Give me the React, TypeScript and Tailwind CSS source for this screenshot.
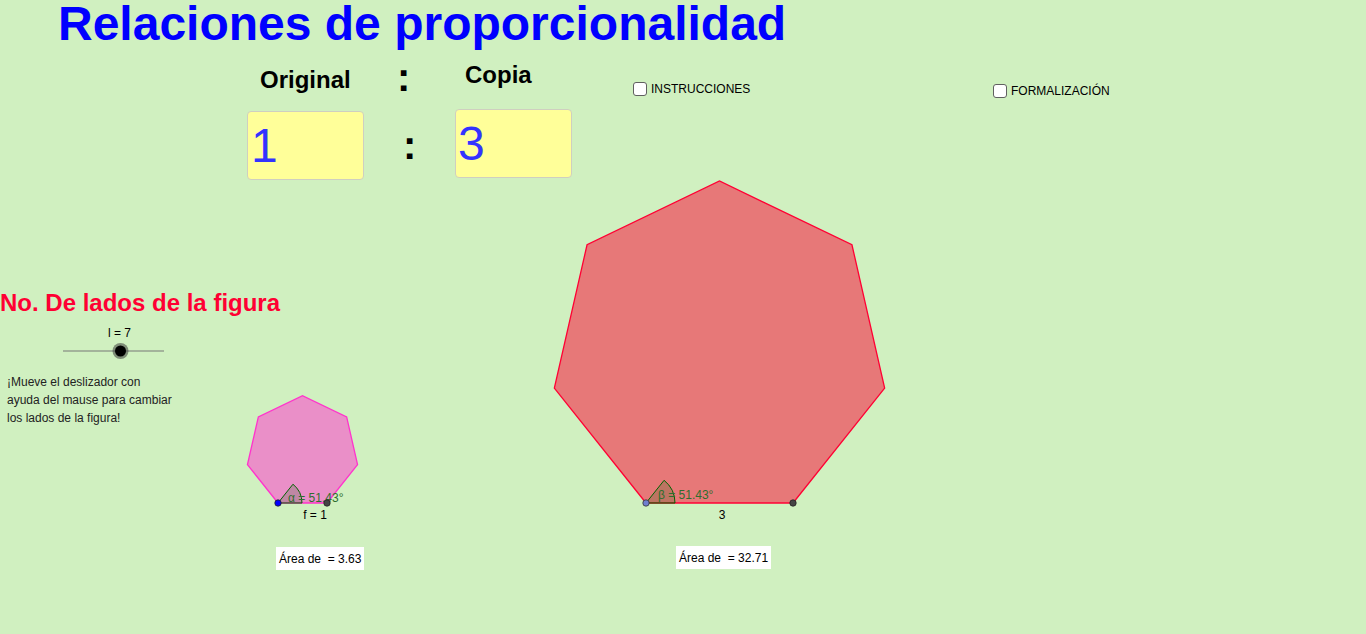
import React from 'react';

type Pt = [number, number];

// regular polygon built from its base edge, going counter-clockwise on screen
function polygon(x0: number, y0: number, side: number, n: number): Pt[] {
  const pts: Pt[] = [[x0, y0]];
  let ang = 0;
  let [x, y] = [x0, y0];
  for (let i = 1; i < n; i++) {
    x += side * Math.cos(ang);
    y -= side * Math.sin(ang);
    pts.push([x, y]);
    ang += (2 * Math.PI) / n;
  }
  return pts;
}

function sector(cx: number, cy: number, r: number, deg: number) {
  const a = (deg * Math.PI) / 180;
  const ex = cx + r * Math.cos(a);
  const ey = cy - r * Math.sin(a);
  return `M ${cx} ${cy} L ${cx + r} ${cy} A ${r} ${r} 0 0 0 ${ex} ${ey} Z`;
}

const toStr = (p: Pt[]) => p.map(([x, y]) => `${x},${y}`).join(' ');

const small = polygon(278, 503, 49, 7);
const big = polygon(646, 503, 147, 7);

const font = { fontFamily: '"Liberation Sans", Arial, sans-serif' };

function Checkbox({ label }: { label: string }) {
  return (
    <div className="flex items-center gap-[4px]">
      <div className="w-[14px] h-[14px] rounded-[3px] border border-[#606060] bg-white" />
      <span className="text-[12px] text-black leading-none">{label}</span>
    </div>
  );
}

export default function App() {
  return (
    <div className="relative w-[1366px] h-[634px] bg-[#d0f0c0] overflow-hidden" style={font}>
      <svg className="absolute inset-0" width={1366} height={634}>
        <polygon points={toStr(small)} fill="#ea8fc8" stroke="#ff33cc" strokeWidth={1.3} />
        <polygon points={toStr(big)} fill="#e77878" stroke="#ff0033" strokeWidth={1.3} />

        <path d={sector(278, 503, 24, 51.43)} fill="rgba(0,100,0,0.18)" stroke="#006400" strokeWidth={1} />
        <path d={sector(646, 503, 29, 51.43)} fill="rgba(0,100,0,0.18)" stroke="#006400" strokeWidth={1} />

        <text x={288} y={502} fontSize={12} fill="#2f6e2f" style={font}>α = 51.43°</text>
        <text x={658} y={499} fontSize={12} fill="#2f6e2f" style={font}>β = 51.43°</text>
        <text x={315} y={519} fontSize={12} fill="#000" textAnchor="middle" style={font}>f = 1</text>
        <text x={722} y={519} fontSize={12} fill="#000" textAnchor="middle" style={font}>3</text>

        <circle cx={278} cy={503} r={3.2} fill="#0000ff" stroke="#222" strokeWidth={0.8} />
        <circle cx={327} cy={503} r={3.2} fill="#444" stroke="#222" strokeWidth={0.8} />
        <circle cx={646} cy={503} r={3.2} fill="#6f7fd0" stroke="#333" strokeWidth={0.8} />
        <circle cx={793} cy={503} r={3.2} fill="#444" stroke="#222" strokeWidth={0.8} />

        {/* slider */}
        <line x1={63} y1={351} x2={164} y2={351} stroke="#777" strokeWidth={1} />
        <circle cx={120.5} cy={351} r={8} fill="rgba(60,60,60,0.55)" />
        <circle cx={120.5} cy={351} r={5.5} fill="#000" />
      </svg>

      <h1 className="absolute left-[58px] top-0 text-[48px] leading-none font-bold text-[#0000ff] whitespace-nowrap">
        Relaciones de proporcionalidad
      </h1>

      <div className="absolute left-[260px] top-[62px] text-[24px] font-bold text-black">Original</div>
      <div className="absolute left-[397px] top-[57px] text-[40px] font-bold text-black leading-none">:</div>
      <div className="absolute left-[465px] top-[57px] text-[24px] font-bold text-black">Copia</div>

      <div className="absolute left-[247px] top-[111px] w-[117px] h-[69px] bg-[#ffff99] border border-[#cfcfc0] rounded-[4px] flex items-center pl-[3px]">
        <span className="text-[48px] text-[#3333ff] leading-none">1</span>
      </div>
      <div className="absolute left-[403px] top-[125px] text-[40px] font-bold text-black leading-none">:</div>
      <div className="absolute left-[455px] top-[109px] w-[117px] h-[69px] bg-[#ffff99] border border-[#cfcfc0] rounded-[4px] flex items-center pl-[2px]">
        <span className="text-[48px] text-[#3333ff] leading-none">3</span>
      </div>

      <div className="absolute left-[633px] top-[82px]">
        <Checkbox label="INSTRUCCIONES" />
      </div>
      <div className="absolute left-[993px] top-[84px]">
        <Checkbox label="FORMALIZACIÓN" />
      </div>

      <div className="absolute left-0 top-[285px] text-[24px] font-bold text-[#ff0033] whitespace-nowrap">
        No. De lados de la figura
      </div>
      <div className="absolute left-[108px] top-[324px] text-[12px] text-black">l = 7</div>

      <div className="absolute left-[7px] top-[373px] text-[12px] leading-[18px] text-[#222]">
        <p>¡Mueve el deslizador con</p>
        <p>ayuda del mause para cambiar</p>
        <p>los lados de la figura!</p>
      </div>

      <div className="absolute left-[276px] top-[547px] w-[88px] h-[23px] bg-white flex items-center px-[3px] text-[12px] text-black whitespace-pre">
        Área de  = 3.63
      </div>
      <div className="absolute left-[676px] top-[546px] w-[95px] h-[23px] bg-white flex items-center px-[3px] text-[12px] text-black whitespace-pre">
        Área de  = 32.71
      </div>
    </div>
  );
}
